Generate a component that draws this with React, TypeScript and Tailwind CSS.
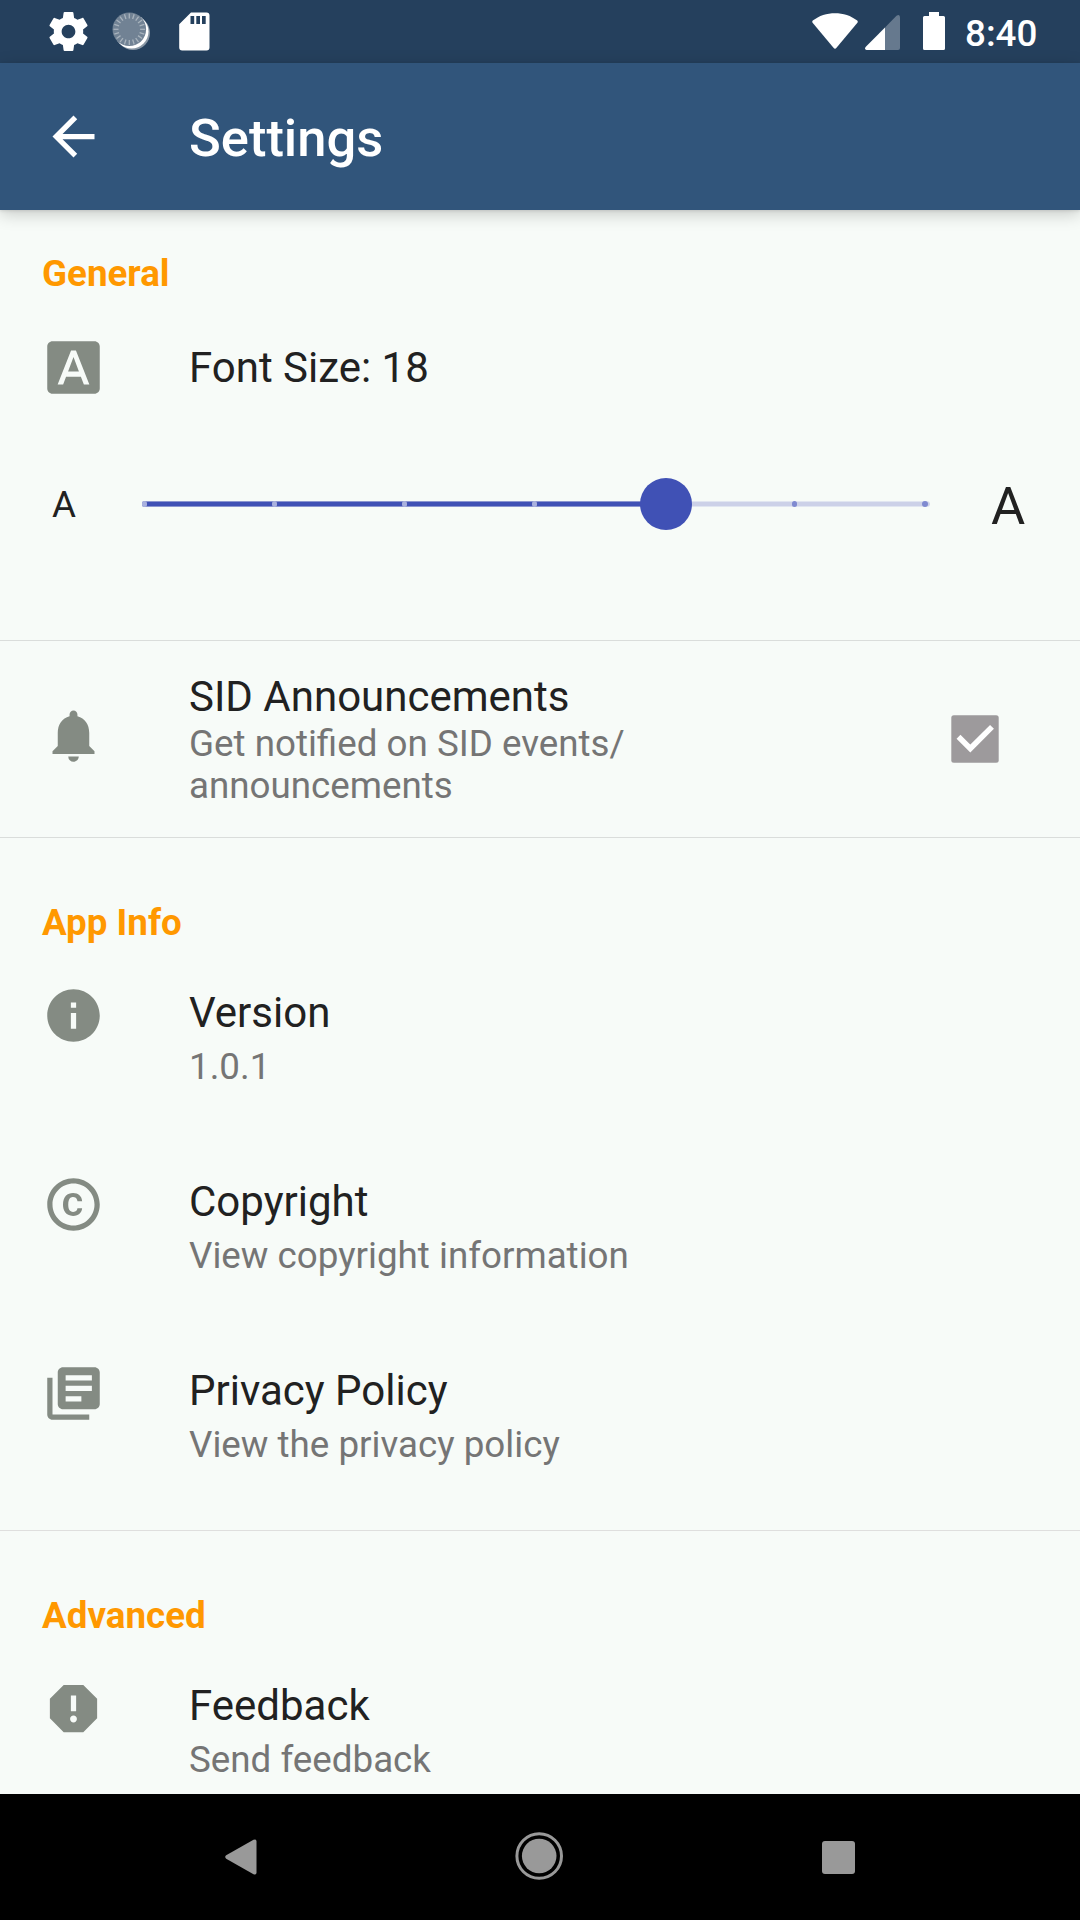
import React from "react";
import {
  MdCopyright,
  MdFontDownload,
  MdInfo,
  MdLibraryBooks,
  MdNotifications,
  MdReport,
} from "react-icons/md";
import type { IconType } from "react-icons";

const SPOKES = Array.from({ length: 20 }, (_, i) => i * 18);
const STOPS = [0, 1, 2, 3, 4, 5, 6];
const CURRENT_STOP = 4;

function StatusBar() {
  return (
    <div className="flex h-[63px] shrink-0 bg-[#25405d] text-white">
      <svg className="mt-[8px] ml-[45px] size-[47px]" viewBox="0 0 24 24" fill="currentColor">
        <path d="M19.43 12.98c.04-.32.07-.64.07-.98s-.03-.66-.07-.98l2.11-1.65c.19-.15.24-.42.12-.64l-2-3.46c-.12-.22-.39-.3-.61-.22l-2.49 1c-.52-.4-1.08-.73-1.69-.98l-.38-2.65C14.46 2.18 14.25 2 14 2h-4c-.25 0-.46.18-.49.42l-.38 2.65c-.61.25-1.17.59-1.69.98l-2.49-1c-.23-.09-.49 0-.61.22l-2 3.46c-.13.22-.07.49.12.64l2.11 1.65c-.04.32-.07.65-.07.98s.03.66.07.98l-2.11 1.65c-.19.15-.24.42-.12.64l2 3.46c.12.22.39.3.61.22l2.49-1c.52.4 1.08.73 1.69.98l.38 2.65c.03.24.24.42.49.42h4c.25 0 .46-.18.49-.42l.38-2.65c.61-.25 1.17-.59 1.69-.98l2.49 1c.23.09.49 0 .61-.22l2-3.46c.12-.22.07-.49-.12-.64l-2.11-1.65zM12 15.5c-1.93 0-3.5-1.57-3.5-3.5s1.57-3.5 3.5-3.5 3.5 1.57 3.5 3.5-1.57 3.5-3.5 3.5z" />
      </svg>
      <svg className="mt-[12px] ml-[20px] size-[40px]" viewBox="0 0 40 40">
        <circle cx="21" cy="21" r="17" fill="#8997a5" />
        <circle cx="19.500" cy="19.500" r="17" fill="#ffffff" />
        <circle cx="17.300" cy="17.300" r="16.800" fill="#718294" />
        {SPOKES.map((a) => (
          <path
            key={a}
            d="M17.300 1.500v5"
            stroke="#a8b3bd"
            strokeWidth="1.300"
            transform={`rotate(${a} 17.3 17.3)`}
          />
        ))}
      </svg>
      <svg className="mt-[12px] ml-[27px] h-[39px] w-[31px]" viewBox="0 0 31 39" fill="currentColor">
        <path
          fillRule="evenodd"
          d="M12 .5h15.500a3 3 0 0 1 3 3v32a3 3 0 0 1-3 3H3.200a3 3 0 0 1-3-3V12.200zM11.500 4v8h3.700V4zM17.300 4v8H21V4zM23 4v8h3.700V4z"
        />
      </svg>
      <svg className="mt-[13px] ml-[602px] h-[37px] w-[46px]" viewBox="0 0 46 37" fill="currentColor">
        <path d="M.8 7.500C13-2.300 33-2.300 45.200 7.500q1 1 .2 2.200L24.500 34.800q-1.500 1.700-3 0L.6 9.700Q-.2 8.500.8 7.500z" />
      </svg>
      <svg className="mt-[14px] ml-[7px] h-[36px] w-[35px]" viewBox="0 0 35 36" fill="currentColor">
        <path opacity=".3" d="M20 13.500 31.500 1.700Q35 -.5 35 3.500V34q0 2-2 2H20z" />
        <path d="M20 13.500V36H1.500Q-.8 35.500.6 33z" />
      </svg>
      <svg className="mt-[12px] ml-[23px] h-[38px] w-[22px]" viewBox="0 0 22 38" fill="currentColor">
        <path d="M6 0h10v4h4.500Q22 4 22 5.500v31q0 1.500-1.500 1.500h-19Q0 38 0 36.500v-31Q0 4 1.500 4H6z" />
      </svg>
      <span className="mt-[11px] ml-[20px] text-[36.750px] leading-[46px] font-medium">8:40</span>
    </div>
  );
}

function AppBar() {
  return (
    <div className="z-10 flex h-[147px] shrink-0 items-center bg-[#31557b] text-white shadow-[0_4px_16px_rgba(0,0,0,0.2),0_1px_3px_rgba(0,0,0,0.1)]">
      <svg className="ml-[42px] size-[63px]" viewBox="0 0 24 24" fill="currentColor">
        <path d="M20 11H7.830l5.590-5.590L12 4l-8 8 8 8 1.410-1.410L7.830 13H20v-2z" />
      </svg>
      <h1 className="mt-[2px] ml-[84px] text-[52.500px] leading-[60px] font-medium">Settings</h1>
    </div>
  );
}

function SectionTitle({ children }: { children: React.ReactNode }) {
  return (
    <h2 className="ml-[42px] h-[42px] text-[36.750px] leading-[42px] font-bold text-[#ff9800]">{children}</h2>
  );
}

function Row({ icon: Icon, title, subtitle }: { icon: IconType; title: string; subtitle: string }) {
  return (
    <div className="flex h-[189px] shrink-0">
      <Icon className="ml-[42px] size-[63px] text-[#848b83]" />
      <div className="ml-[84px] flex flex-col">
        <span className="mt-[5px] text-[42px] leading-[48px]">{title}</span>
        <span className="mt-[9px] text-[36.750px] leading-[42px] text-[#757575]">{subtitle}</span>
      </div>
    </div>
  );
}

function FontSlider() {
  return (
    <div className="relative h-[52px] w-[788px]">
      <div className="absolute top-[23px] left-0 h-[6px] w-full rounded-r-full border-y border-[#e1e6f1] bg-[#ccd1e8]" />
      <div className="absolute top-[23px] left-0 h-[6px] w-[522px] rounded-l-full border-y border-[#8c96d0] bg-[#4051b5]" />
      {STOPS.map((s) => (
        <span
          key={s}
          className={`absolute top-[23.400px] size-[5.250px] rounded-full ${s < CURRENT_STOP ? "bg-[#a9b1df]" : "bg-[#7f8ad0]"}`}
          style={{ left: s * 130.1 - 0.3 }}
        />
      ))}
      <div className="absolute top-[-0.500px] left-[497.500px] size-[52.500px] rounded-full bg-[#4051b5]" />
    </div>
  );
}

export default function App() {
  return (
    <div className="flex h-[1920px] w-[1080px] flex-col overflow-hidden bg-[#f7fbf8] font-['Roboto',sans-serif] text-[#212121]">
      <StatusBar />
      <AppBar />
      <main className="flex h-[1584px] shrink-0 flex-col overflow-hidden">
        <section className="flex h-[430px] shrink-0 flex-col pt-[43px]">
          <SectionTitle>General</SectionTitle>
          <div className="mt-[41px] flex h-[63px] items-center">
            <MdFontDownload className="ml-[42px] size-[63px] text-[#848b83]" />
            <span className="ml-[84px] text-[42px] leading-[48px]">Font Size: 18</span>
          </div>
          <div className="mt-[79px] flex h-[52px] items-center">
            <span className="mt-[2px] ml-[52px] w-[24px] text-[36.750px] leading-[42px]">A</span>
            <div className="ml-[66px]">
              <FontSlider />
            </div>
            <span className="mt-[3px] ml-[61px] text-[52.500px] leading-[60px]">A</span>
          </div>
        </section>
        <section className="flex h-[198px] shrink-0 border-y border-[#dadddb]">
          <MdNotifications className="mt-[63px] ml-[42px] size-[63px] text-[#848b83]" />
          <div className="mt-[32px] ml-[84px] flex w-[762px] flex-col">
            <span className="text-[42px] leading-[48px]">SID Announcements</span>
            <span className="mt-[2px] text-[36.750px] leading-[42px] text-[#757575]">
              Get notified on SID events/
              <br />
              announcements
            </span>
          </div>
          <svg className="mt-[74px] size-[48px]" viewBox="0 0 48 48">
            <rect x=".3" y=".3" width="47.400" height="47.400" rx="2.500" fill="#9d9a9c" />
            <path d="M7.500 21.800 19.300 33.500 41 11.900" fill="none" stroke="#ffffff" strokeWidth="5.500" />
          </svg>
        </section>
        <section className="flex h-[692px] shrink-0 flex-col pt-[64px]">
          <SectionTitle>App Info</SectionTitle>
          <div className="mt-[40px]">
            <Row icon={MdInfo} title="Version" subtitle="1.0.1" />
            <Row icon={MdCopyright} title="Copyright" subtitle="View copyright information" />
            <Row icon={MdLibraryBooks} title="Privacy Policy" subtitle="View the privacy policy" />
          </div>
        </section>
        <section className="flex shrink-0 flex-col border-t border-[#dfdfde] pt-[64px]">
          <SectionTitle>Advanced</SectionTitle>
          <div className="mt-[40px]">
            <Row icon={MdReport} title="Feedback" subtitle="Send feedback" />
          </div>
        </section>
      </main>
      <nav className="flex h-[126px] shrink-0 items-center bg-black text-[#999999]">
        <svg className="ml-[225px] h-[36px] w-[32px]" viewBox="0 0 32 36" fill="currentColor">
          <path d="M1.200 16.300 28.500.8Q31.500-.5 31.500 2.500v31Q31.500 36.500 28.500 35.200L1.200 19.700Q-.8 18 1.200 16.300z" />
        </svg>
        <svg className="mb-[2px] ml-[258px] size-[48px]" viewBox="0 0 48 48">
          <circle cx="24.200" cy="24" r="22.300" fill="none" stroke="currentColor" strokeWidth="3" />
          <circle cx="24.200" cy="24" r="17.300" fill="currentColor" />
        </svg>
        <div className="ml-[259px] size-[33px] rounded-[3px] bg-[#999999]" />
      </nav>
    </div>
  );
}
